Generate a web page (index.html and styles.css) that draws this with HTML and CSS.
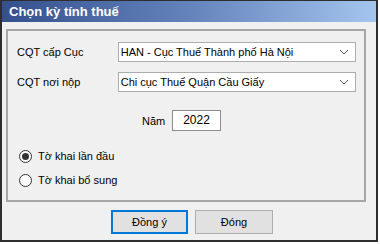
FILE: index.html
```html
<!DOCTYPE html>
<html lang="vi">
<head>
    <meta charset="UTF-8">
    <title>Chọn kỳ tính thuế</title>
    <link rel="stylesheet" href="styles.css">
</head>
<body>
    <div class="window">
        <div class="titlebar">Chọn kỳ tính thuế</div>

        <div class="content">
            <div class="groupbox">
                <div class="row">
                    <label class="lbl">CQT cấp Cục</label>
                    <div class="combo">
                        <span>HAN - Cục Thuế Thành phố Hà Nội</span>
                        <svg width="10" height="6" viewBox="0 0 10 6"><path d="M1 1 L5 5 L9 1" fill="none" stroke="#555" stroke-width="1"/></svg>
                    </div>
                </div>
                <div class="row">
                    <label class="lbl">CQT nơi nộp</label>
                    <div class="combo">
                        <span>Chi cục Thuế Quận Cầu Giấy</span>
                        <svg width="10" height="6" viewBox="0 0 10 6"><path d="M1 1 L5 5 L9 1" fill="none" stroke="#555" stroke-width="1"/></svg>
                    </div>
                </div>

                <div class="year-row">
                    <label class="lbl-year">Năm</label>
                    <div class="year-box">2022</div>
                </div>

                <div class="radios">
                    <div class="radio-item">
                        <span class="radio checked"></span>
                        <span>Tờ khai lần đầu</span>
                    </div>
                    <div class="radio-item">
                        <span class="radio"></span>
                        <span>Tờ khai bổ sung</span>
                    </div>
                </div>
            </div>

            <div class="buttons">
                <button type="button" class="btn btn-default">Đồng ý</button>
                <button type="button" class="btn">Đóng</button>
            </div>
        </div>
    </div>
</body>
</html>
```

FILE: styles.css
```css
body {
    margin: 0;
    padding: 0;
    background-color: #ffffff;
    font-family: "Liberation Sans", Arial, sans-serif;
    font-size: 11px;
    color: #000;
}

.window {
    width: 378px;
    height: 242px;
    box-sizing: border-box;
    border: 2px solid #2e2e2e;
    border-top-width: 1px;
    background-color: #f0f0f0;
    display: flex;
    flex-direction: column;
}

.titlebar {
    height: 21px;
    line-height: 21px;
    padding-left: 7px;
    color: #fff;
    font-size: 13px;
    font-weight: bold;
    background: linear-gradient(to right, #34508e, #6483bb 50%, #a3c5ee);
}

.content {
    padding: 7px 0 0 4px;
}

/* cadre du groupe */
.groupbox {
    width: 360px;
    height: 173px;
    box-sizing: border-box;
    border: 2px solid #a6a6a6;
    padding: 11px 8px 0 9px;
}

.row {
    display: flex;
    align-items: center;
    margin-bottom: 10px;
}

.lbl {
    width: 101px;
}

.combo {
    width: 239px;
    height: 20px;
    box-sizing: border-box;
    border: 1px solid #acacac;
    background-color: #fff;
    display: flex;
    align-items: center;
    justify-content: space-between;
    padding: 0 6px 0 2px;
}

.year-row {
    display: flex;
    align-items: center;
    margin: 18px 0 0 125px;
}

.lbl-year {
    width: 30px;
}

.year-box {
    width: 49px;
    height: 21px;
    box-sizing: border-box;
    border: 1px solid #8c8c8c;
    background-color: #fff;
    text-align: center;
    line-height: 19px;
    font-size: 12px;
}

.radios {
    margin-top: 18px;
    display: flex;
    flex-direction: column;
    gap: 10px;
}

.radio-item {
    display: flex;
    align-items: center;
    gap: 6px;
    margin-left: 2px;
    height: 14px;
}

.radio {
    width: 13px;
    height: 13px;
    box-sizing: border-box;
    border: 1px solid #333;
    border-radius: 50%;
    background-color: #fff;
    position: relative;
}

.radio.checked::after {
    content: "";
    position: absolute;
    left: 2px;
    top: 2px;
    width: 7px;
    height: 7px;
    border-radius: 50%;
    background-color: #333;
}

/* boutons du bas */
.buttons {
    display: flex;
    gap: 7px;
    margin: 8px 0 0 105px;
}

.btn {
    width: 78px;
    height: 24px;
    background-color: #e1e1e1;
    border: 1px solid #adadad;
    font-family: "Liberation Sans", Arial, sans-serif;
    font-size: 11px;
    padding: 0;
}

.btn-default {
    border: 2px solid #0078d7;
    width: 77px;
}
```
